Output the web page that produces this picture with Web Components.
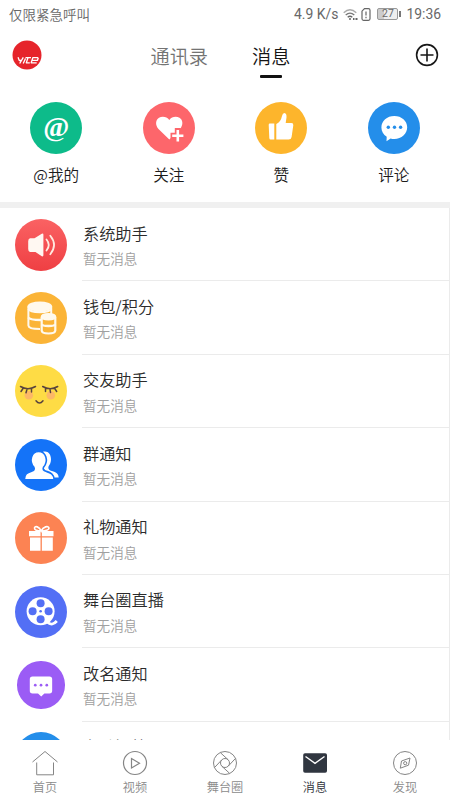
<!DOCTYPE html>
<html lang="zh-CN">
<head>
<meta charset="utf-8">
<title>消息</title>
<style>
html,body{margin:0;height:100%;overflow:hidden;background:#fff}
body{font-family:"Noto Sans CJK SC",sans-serif;font-weight:350}
</style>
</head>
<body>
<message-app></message-app>
<script>
const ICONS = {
  at: ['#0dbb8a', `<text x="26.300" y="34" text-anchor="middle" font-family="Liberation Serif, serif" font-weight="700" font-size="28" fill="#fff">@</text>`],
  heart: ['#fd666b', `<path d="M26.300 37.500 15.500 27C12 23 12.500 18 16 15.800c3.500-2 8-1 10.300 2.200 2.200-3.200 6.800-4.200 10.200-2.200 3.500 2.200 4 7.200.5 11.200z" fill="#fff"/><path d="M34.800 26v15M27.500 33.700H42" stroke="#fd666b" stroke-width="6"/><path d="M34.800 28v11.400M29.200 33.700h11.200" stroke="#fff" stroke-width="2.600"/>`],
  thumb: ['#fdb52c', `<path d="M14.500 21.500h4.800v16h-3.800q-1 0-1.200-1.500l-.6-13q0-1.500.8-1.500zM21.300 22q4.500-2 5.700-8 .6-3 2.500-3 2.300.3 2 4.500l-.8 5.500h5.800q2 0 1.800 2.300l-1.700 11.700q-.4 2.500-3 2.500H21.300z" fill="#fff"/>`],
  comment: ['#248eea', `<path d="M26.300 14c7.300 0 12.900 4.900 12.900 11.300s-5.600 11.700-12.900 11.700q-2 0-3.700-.5l-4.100 2.700.2-4.500c-3.300-2-5.300-5.300-5.300-9.200C13.400 18.900 19 14 26.300 14z" fill="#fff"/><g fill="#248eea"><circle cx="20.300" cy="25.300" r="1.700"/><circle cx="26.500" cy="25.300" r="1.700"/><circle cx="32.600" cy="25.300" r="1.700"/></g>`],
  speaker: ['linear-gradient(#fa6263,#ef3f43)', `<path d="M15 19.300h4.500l7.300-4.600q1.600-.5 1.600 1v20.600q0 1.500-1.600 1l-6.300-4.400H15q-1.800-.7-1.800-3v-7.600q0-2.300 1.800-3z" fill="#fff8f2"/><path d="M31.500 20.500q4.500 5.500 0 11M35.300 16.800q7.500 9.200 0 18.400" fill="none" stroke="#ffe9df" stroke-width="1.800" stroke-linecap="round"/>`],
  coins: ['#fbb437', `<g fill="none" stroke="#fff9ed" stroke-width="2"><path d="M13.400 14.500v19c0 2 4 3.500 11.600 3.500M36.200 14.500V22"/><ellipse cx="24.800" cy="14.600" rx="11.400" ry="4" fill="#fff9ed"/><path d="M13.400 17c1 2 6 3 11.400 3s10.400-1 11.400-3M13.400 25.500c1 2 6 2.500 12.600 2.500" stroke-width="2.400"/><path d="M26.700 25v13.500c0 4 13.600 4 13.600 0V25" fill="#fbb437" stroke-width="2.200"/><ellipse cx="33.500" cy="24.800" rx="6.800" ry="2.800" fill="#fff9ed"/><path d="M26.700 32.500c1 2 12.600 2 13.600 0" stroke-width="2.400"/></g>`],
  face: ['#fedc45', `<g fill="#fcb866"><circle cx="13.800" cy="30.300" r="4.300"/><circle cx="35.800" cy="30.300" r="4.300"/></g><g fill="none" stroke="#59443e" stroke-width="1.500" stroke-linecap="round"><path d="M5.500 21.500q7.500 4.500 15 0M8 23.500l-2 3M12 24.300l-1 3.500M16.500 24v3M27.700 21.500q7.500 4.500 15 0M30.500 23.500v3M35 24.300l.5 3.200M39.700 23.500l2 3M21 35.800q3.500 4.500 7 0"/></g>`],
  group: ['#1473f8', `<path d="M28 12.800c4.500-1.500 8 2 8 7.500 0 3-1 5-2.400 7q-1 3 1.700 4.200c4.500 1.600 8 2 8.400 7H36l-8-10z" fill="#fff"/><path d="M9.300 40.800c0-6 3.200-7.200 7.200-8.600q3.700-1 2.400-3.900c-5.500-6.500-2.400-15.800 4.800-15.800s10.300 9.300 4.800 15.800q-1.300 2.900 2.400 3.900c4 1.400 8.200 2.600 8.200 8.600z" fill="#fff" stroke="#1473f8" stroke-width="1.600"/>`],
  gift: ['#fc8353', `<path d="M14 19h24.500v5.300H14zM15 25.500h22.800v13.200H15z" fill="#fff"/><path d="M26.200 19v20" stroke="#fc8353" stroke-width="1.300"/><path d="M26.200 19c-2-4.500-6.200-5.500-6.700-3-.3 2 2.500 3 6.700 3 4.200 0 8-1 7.700-3-.5-2.500-5.700-1.500-7.700 3z" fill="none" stroke="#fff" stroke-width="1.700"/>`],
  reel: ['#536ff5', `<circle cx="25.600" cy="25.300" r="14" fill="#fff"/><path d="M32 36q3 2.500 5.300 2t4.500-3" fill="none" stroke="#fff" stroke-width="2.800"/><g fill="#536ff5"><circle cx="25.600" cy="17.300" r="4"/><circle cx="25.600" cy="33.300" r="4"/><circle cx="17.600" cy="25.300" r="4"/><circle cx="33.600" cy="25.300" r="4"/><circle cx="25.600" cy="25.300" r="1.300"/></g>`],
  chat: ['#9b5cf5', `<path d="M17 17h18.500q3 0 3 3v12.500q0 3-3 3H30l-3.500 3.300-3.500-3.300h-6q-3 0-3-3V20q0-3 3-3z" fill="#fff"/><g fill="#9b5cf5"><circle cx="20" cy="26.500" r="1.500"/><circle cx="26.300" cy="26.500" r="1.500"/><circle cx="32.600" cy="26.500" r="1.500"/></g>`],
  blank: ['#248eea', '']
};
const NAV = {
  home: `<path d="M1.500 12 14 1.500 26.500 12M5.700 12.500v12.300h16.800V12.500"/>`,
  video: `<circle cx="14" cy="13" r="11.500" stroke-width="1.200"/><path d="M10.500 8.500v9.500l8-4.700z" stroke-width="1.200"/>`,
  aperture: `<circle cx="14" cy="13" r="11.500"/><circle cx="14" cy="13" r="4.500"/><path d="M17.200 9.800 9.200 2.500M17.200 16.200l7.500-8M10.800 16.200l8 7.300M10.800 9.800l-7.500 8"/>`,
  mail: `<rect x="2.200" y="3.300" width="23.800" height="19.400" rx="1.800" fill="#303640" stroke="none"/><path d="m4.500 6.500 9.500 6.800 9.500-6.800" stroke="#fff" stroke-width="1.400"/>`,
  compass: `<circle cx="14" cy="13" r="11.500"/><path d="m19 8-1.500 7.200-8.200 3 1.200-7.200z"/><circle cx="14.200" cy="13.200" r="1.600"/>`
};
const define = (name, render) => customElements.define(name, class extends HTMLElement {
  connectedCallback() {
    if (!this.shadowRoot) this.attachShadow({mode: 'open'}).innerHTML = render(this);
  }
});

define('round-icon', el => {
  const [bg, art] = ICONS[el.getAttribute('name')];
  return `<style>:host{display:block;width:var(--size,52px);height:var(--size,52px);border-radius:50%;background:${bg};overflow:hidden;flex:none}svg{display:block;width:100%;height:100%}</style><svg viewBox="0 0 52 52">${art}</svg>`;
});

define('status-bar', () => `<style>
:host{display:flex;height:28px;align-items:center;padding:0 9px;font-size:13.500px;line-height:28px;color:#686868;box-sizing:border-box}
.r{margin-left:auto;display:flex;align-items:center;font-family:Roboto,sans-serif;font-size:13.900px;font-weight:400}
svg{display:block}.speed{margin-right:5px}.time{margin-left:5px}
.bat{width:19px;height:10px;border:1px solid #999;border-radius:2px;background:linear-gradient(90deg,#ccc 30%,#eee 30%);font-size:10.500px;line-height:10px;text-align:center;margin-left:6px}
.tip{width:2px;height:6px;background:#777;margin-left:1px}
</style><span>仅限紧急呼叫</span><div class="r"><span class="speed">4.9 K/s</span>
<svg width="15" height="13" viewBox="0 0 15 13" fill="none" stroke="#aaa" stroke-width="1.300"><path d="M.7 4.700q6.300-6 12.600 0"/><path d="M2.700 7q4.300-3.800 8.600 0" stroke="#777"/><path d="M4.700 9.200q2.300-2 4.600 0" stroke="#666"/><circle cx="7" cy="11" r="1" fill="#666" stroke="none"/><path d="M10 11h1.500m1 0h2" stroke="#666" stroke-width="2"/></svg>
<svg style="margin-left:3px" width="10" height="13" viewBox="0 0 10 13" fill="none" stroke="#666" stroke-width="1.200"><path d="M3.500.7h4q1.500 0 1.500 1.500v8.600q0 1.500-1.500 1.500h-5Q1 12.300 1 10.800V3.200zM5 3.500V7.500M5 8.800v1.400"/></svg>
<span class="bat">27</span><i class="tip"></i><span class="time">19:36</span></div>`);

define('top-bar', () => `<style>
:host{display:grid;grid-template-columns:150.500px 101.500px 1fr 35px;height:55px;align-items:center;font-size:19.200px;line-height:28px;margin-bottom:1px}
svg{display:block}.logo{margin-left:12px;margin-top:-1px}.plus{margin-left:-.5px;margin-top:-1px}.t{color:#737373}.a{justify-self:start;position:relative;color:#151515}
.a::after{content:"";position:absolute;left:8px;bottom:-8px;width:22px;height:2.500px;border-radius:1px;background:#111}
</style>
<svg class="logo" width="30" height="30" viewBox="0 0 30 30"><circle cx="15" cy="15" r="14.500" fill="#e6242b"/><g fill="none" stroke="#fff" stroke-width="1.300" stroke-linejoin="round"><path d="m6 17.300 1.300 3.200h2.500M11.300 17.300l-3.600 6.200M13.500 18.500l-2.300 5M13.500 17.700h5.500M16 17.700l-1.700 5.100h3.500M26.300 17.700h-5.500l-1.600 5.100h5.500M26.300 17.700l-.8 2.600h-5"/></g></svg>
<span class="t">通讯录</span><span class="a">消息</span>
<svg class="plus" width="24" height="24" viewBox="0 0 24 24" fill="none" stroke="#171717" stroke-width="1.600"><circle cx="12" cy="12" r="10.400"/><path d="M12 5.500v13M5.500 12h13"/></svg>`);

define('quick-link', el => `<style>:host{display:flex;flex-direction:column;align-items:center;font-size:15.600px;line-height:24px;color:#1c1c1c;gap:8px}</style>
<round-icon name="${el.getAttribute('icon')}"></round-icon><span><slot></slot></span>`);

define('message-row', el => `<style>
:host{display:flex;height:73.400px;padding-left:15px;flex:none;box-sizing:border-box;align-items:center}
.icon{width:52px;display:flex;justify-content:center}
.body{flex:1;height:100%;margin-left:15px;border-bottom:1px solid #ebebeb;box-sizing:border-box;padding:12.500px 0 0 1px}
.t{font-size:16.200px;line-height:24px;color:#2b2b2b}.s{font-size:13.600px;line-height:20px;color:#a0a0a0;margin-top:3.500px}
</style><div class="icon"><round-icon name="${el.getAttribute('icon')}"${el.getAttribute('icon') === 'chat' ? ' style="--size:47.500px"' : ''}></round-icon></div>
<div class="body"><div class="t"><slot></slot></div>${el.hasAttribute('last') ? '' : '<div class="s">暂无消息</div>'}</div>`);

define('nav-item', el => `<style>
:host{display:flex;flex-direction:column;align-items:center;padding-top:10px;font-size:12.200px;line-height:18px;color:#8b8b8b}
:host([active]){color:#30343c}svg{display:block;margin-bottom:2px}
</style><svg width="28" height="26" viewBox="0 0 28 26" fill="none" stroke="#858585" stroke-width="1">${NAV[el.getAttribute('icon')]}</svg><slot></slot>`);

define('message-app', () => `<style>
:host{display:flex;flex-direction:column;width:450px;height:800px;overflow:hidden;background:#fff}
.quick{display:grid;grid-template-columns:repeat(4,112.500px);height:118px;padding-top:18px;box-sizing:border-box}
.gap{height:6px;background:#f0f0f0;flex:none}
.list{flex:1;min-height:0;overflow:hidden;display:flex;flex-direction:column;border-right:1px solid #ebebeb}
nav{height:60px;display:grid;grid-template-columns:repeat(5,1fr);flex:none;background:#fff}
</style>
<status-bar></status-bar><top-bar></top-bar>
<div class="quick"><quick-link icon="at">@我的</quick-link><quick-link icon="heart">关注</quick-link><quick-link icon="thumb">赞</quick-link><quick-link icon="comment">评论</quick-link></div>
<div class="gap"></div>
<div class="list">
<message-row icon="speaker">系统助手</message-row><message-row icon="coins">钱包/积分</message-row><message-row icon="face">交友助手</message-row><message-row icon="group">群通知</message-row><message-row icon="gift">礼物通知</message-row><message-row icon="reel">舞台圈直播</message-row><message-row icon="chat">改名通知</message-row><message-row icon="blank" last>主动问答</message-row>
</div>
<nav><nav-item icon="home">首页</nav-item><nav-item icon="video">视频</nav-item><nav-item icon="aperture">舞台圈</nav-item><nav-item icon="mail" active>消息</nav-item><nav-item icon="compass">发现</nav-item></nav>`);
</script>
</body>
</html>
